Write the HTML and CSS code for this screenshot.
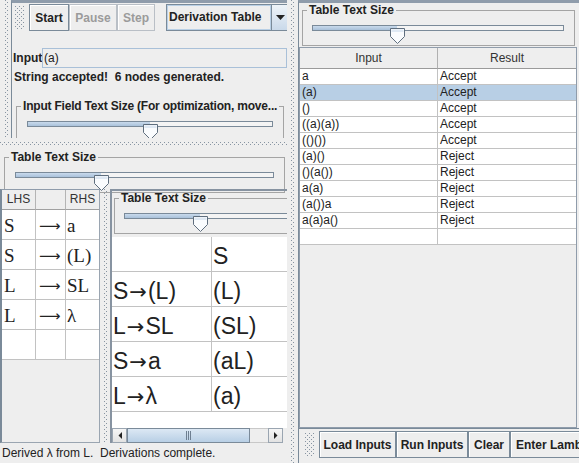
FILE: index.html
```html
<!DOCTYPE html>
<html>
<head>
<meta charset="utf-8">
<link rel="stylesheet" href="styles.css">
</head>
<body>
<div class="app">
  <div class="left">
    <div class="top">
      <div class="edge"><div class="dots vstrip"></div></div>
      <div class="ctrl">
        <div class="toolbar">
          <div class="grip dots"></div>
          <div class="btn b-start">Start</div>
          <div class="btn dis b-pause">Pause</div>
          <div class="btn dis b-step">Step</div>
          <div class="combo">
            <div class="combo-val">Derivation Table</div>
            <div class="combo-arr"><svg width="9" height="5" viewBox="0 0 9 5"><path d="M0 0H9L4.5 5Z" fill="#222"/></svg></div>
          </div>
        </div>
        <div class="inrow"><span class="lbl">Input</span><div class="field">(a)</div></div>
        <div class="msg">String accepted!  6 nodes generated.</div>
        <fieldset class="tbox tbox-in">
          <legend>Input Field Text Size (For optimization, move...</legend>
          <div class="slider s-in">
            <div class="track"><div class="fill" style="width:122px"></div></div>
            <svg class="thumb" style="left:116px" width="15" height="16" viewBox="0 0 15 16"><path d="M0.5 0.5H14.5V8.5L7.5 15.5L0.5 8.5Z" fill="#fafcfe" stroke="#5f6e7e"/><path d="M1.5 1.5H13.5V4H1.5Z" fill="#dfe9f4"/></svg>
          </div>
        </fieldset>
      </div>
    </div>
    <div class="hdiv"><div class="dots hstrip"></div></div>
    <div class="lwrap">
      <fieldset class="tbox tbox-l">
        <legend>Table Text Size</legend>
        <div class="slider s-l">
          <div class="track"><div class="fill" style="width:85px"></div></div>
          <svg class="thumb" style="left:79px" width="15" height="16" viewBox="0 0 15 16"><path d="M0.5 0.5H14.5V8.5L7.5 15.5L0.5 8.5Z" fill="#fafcfe" stroke="#5f6e7e"/><path d="M1.5 1.5H13.5V4H1.5Z" fill="#dfe9f4"/></svg>
        </div>
      </fieldset>
    </div>
    <div class="lower">
      <div class="gpane">
        <div class="grow ghead">
          <div class="gc c1">LHS</div><div class="gc c2"></div><div class="gc c3">RHS</div>
        </div>
        <div class="grow"><div class="gc c1">S</div><div class="gc c2 arr">⟶</div><div class="gc c3">a</div></div>
        <div class="grow"><div class="gc c1">S</div><div class="gc c2 arr">⟶</div><div class="gc c3">(L)</div></div>
        <div class="grow"><div class="gc c1">L</div><div class="gc c2 arr">⟶</div><div class="gc c3">SL</div></div>
        <div class="grow"><div class="gc c1">L</div><div class="gc c2 arr">⟶</div><div class="gc c3">λ</div></div>
        <div class="grow"><div class="gc c1"></div><div class="gc c2"></div><div class="gc c3"></div></div>
      </div>
      <div class="vdiv"><div class="dots vstrip"></div></div>
      <div class="dpane">
        <div class="dview">
          <div class="dcontent">
            <fieldset class="tbox tbox-d">
              <legend>Table Text Size</legend>
              <div class="slider s-d">
                <div class="track"><div class="fill" style="width:75px"></div></div>
                <svg class="thumb" style="left:69px" width="15" height="16" viewBox="0 0 15 16"><path d="M0.5 0.5H14.5V8.5L7.5 15.5L0.5 8.5Z" fill="#fafcfe" stroke="#5f6e7e"/><path d="M1.5 1.5H13.5V4H1.5Z" fill="#dfe9f4"/></svg>
              </div>
            </fieldset>
            <div class="dtable">
              <div class="drow"><div class="dc d1"></div><div class="dc d2">S</div></div>
              <div class="drow"><div class="dc d1">S<span class="ar">→</span>(L)</div><div class="dc d2">(L)</div></div>
              <div class="drow"><div class="dc d1">L<span class="ar">→</span>SL</div><div class="dc d2">(SL)</div></div>
              <div class="drow"><div class="dc d1">S<span class="ar">→</span>a</div><div class="dc d2">(aL)</div></div>
              <div class="drow"><div class="dc d1">L<span class="ar">→</span>λ</div><div class="dc d2">(a)</div></div>
            </div>
          </div>
        </div>
        <div class="hscroll">
          <div class="sb-btn"><svg width="4" height="7" viewBox="0 0 4 7"><path d="M4 0V7L0.5 3.5Z" fill="#222"/></svg></div>
          <div class="sb-thumb"><div class="sb-grip"></div></div>
          <div class="sb-track"></div>
          <div class="sb-btn"><svg width="4" height="7" viewBox="0 0 4 7"><path d="M0 0V7L3.5 3.5Z" fill="#222"/></svg></div>
          <div class="sb-rest"></div>
        </div>
      </div>
    </div>
    <div class="status">Derived λ from L.  Derivations complete.</div>
  </div>
  <div class="mdiv"><div class="dots vstrip"></div></div>
  <div class="right">
    <fieldset class="tbox tbox-r">
      <legend>Table Text Size</legend>
      <div class="slider s-r">
        <div class="track"><div class="fill" style="width:84px"></div></div>
        <svg class="thumb" style="left:78px" width="15" height="16" viewBox="0 0 15 16"><path d="M0.5 0.5H14.5V8.5L7.5 15.5L0.5 8.5Z" fill="#fafcfe" stroke="#5f6e7e"/><path d="M1.5 1.5H13.5V4H1.5Z" fill="#dfe9f4"/></svg>
      </div>
    </fieldset>
    <div class="rpane">
      <div class="rrow rhead"><div class="rc r1">Input</div><div class="rc r2">Result</div></div>
      <div class="rrow"><div class="rc r1">a</div><div class="rc r2">Accept</div></div>
      <div class="rrow sel"><div class="rc r1">(a)</div><div class="rc r2">Accept</div></div>
      <div class="rrow"><div class="rc r1">()</div><div class="rc r2">Accept</div></div>
      <div class="rrow"><div class="rc r1">((a)(a))</div><div class="rc r2">Accept</div></div>
      <div class="rrow"><div class="rc r1">(()())</div><div class="rc r2">Accept</div></div>
      <div class="rrow"><div class="rc r1">(a)()</div><div class="rc r2">Reject</div></div>
      <div class="rrow"><div class="rc r1">()(a())</div><div class="rc r2">Reject</div></div>
      <div class="rrow"><div class="rc r1">a(a)</div><div class="rc r2">Reject</div></div>
      <div class="rrow"><div class="rc r1">(a())a</div><div class="rc r2">Reject</div></div>
      <div class="rrow"><div class="rc r1">a(a)a()</div><div class="rc r2">Reject</div></div>
      <div class="rrow"><div class="rc r1"></div><div class="rc r2"></div></div>
    </div>
    <div class="btoolbar">
      <div class="grip dots"></div>
      <div class="btn b-load">Load Inputs</div>
      <div class="btn b-run">Run Inputs</div>
      <div class="btn b-clear">Clear</div>
      <div class="btn b-lambda">Enter Lambda</div>
    </div>
  </div>
</div>
</body>
</html>
```
FILE: styles.css
```css
* { box-sizing: border-box; }
html, body { margin: 0; padding: 0; }
body {
  width: 579px; height: 463px; overflow: hidden;
  background: #eeeeee;
  font-family: "Liberation Sans", Arial, sans-serif;
  font-size: 12px; color: #222;
}
.app { display: flex; height: 463px; }

.dots {
  background:
    conic-gradient(at 1px 1px, transparent 75%, #8794a2 0) 0 0 / 4px 4px,
    conic-gradient(at 1px 1px, transparent 75%, #8794a2 0) 2px 2px / 4px 4px;
}
.vstrip { width: 4px; height: 100%; }
.hstrip { height: 4px; width: 100%; }

.left { width: 287px; flex: none; display: flex; flex-direction: column; }
.top { height: 138px; display: flex; }
.edge { width: 11px; flex: none; padding-left: 5px; }
.ctrl {
  flex: 1; min-width: 0; overflow: hidden;
  border-left: 1px solid #7a8a99; border-top: 3px solid #8f9cab;
}
.toolbar { display: flex; height: 30px; padding-top: 1px; }
.grip { width: 10px; height: 24px; margin: 2px 0 0 3px; flex: none; }

.btn {
  height: 27px; flex: none;
  border: 1px solid #7a8a99;
  box-shadow: inset 1px 1px 0 #fff;
  background: #eeeeee;
  font-weight: bold; color: #222;
  display: flex; align-items: center; justify-content: center;
  white-space: nowrap; overflow: hidden;
}
.btn.dis { border-color: #b9bfc6; color: #9b9b9b; }
.b-start { width: 40px; margin-left: 4px; }
.b-pause { width: 48px; }
.b-step { width: 38px; }

.combo {
  margin-left: 11px; height: 27px; width: 124px; flex: none;
  border: 1px solid #7a8a99; display: flex;
}
.combo-val {
  width: 104px; flex: none;
  border: 1px solid #b8cfe5;
  font-weight: bold; line-height: 23px; padding-left: 1px;
  white-space: nowrap;
}
.combo-arr {
  width: 18px; flex: none;
  border-left: 1px solid #7a8a99;
  background: linear-gradient(#eef3f8, #c9d9ea);
  display: flex; align-items: center; justify-content: center;
}

.inrow { display: flex; align-items: center; height: 20px; margin-top: 15px; }
.lbl { width: 30px; flex: none; font-weight: bold; padding-left: 1px; }
.field {
  flex: 1; height: 20px; border: 1px solid #a9c0d8;
  line-height: 18px; padding-left: 1px; white-space: nowrap;
}
.msg { font-weight: bold; margin-top: 2px; padding-left: 2px; line-height: 14px; white-space: pre; }

.tbox {
  margin: 0; padding: 0; min-width: 0;
  border: 1px solid #a4a4a4;
}
.tbox legend {
  font-weight: bold; line-height: 14px; padding: 0 2px; margin-left: 4px;
  color: #222; white-space: nowrap;
}
.tbox-in { margin: 15px 3px 0 4px; }
.tbox-in legend { letter-spacing: -0.2px; }

.slider { position: relative; height: 20px; }
.track {
  margin-top: 8px; height: 6px;
  border: 1px solid #7a8a99; background: #f4f4f4;
  display: flex;
}
.fill { height: 100%; background: linear-gradient(#c9daec, #a9c1da); }
.thumb { position: absolute; top: 3px; }
.s-in { margin-left: 10px; width: 246px; }
.s-l { margin-left: 10px; width: 259px; }
.s-d { margin-left: 9px; width: 262px; }
.s-r { margin-left: 9px; width: 252px; }

.hdiv { height: 10px; padding-top: 4px; }
.lwrap { height: 41px; padding: 2px 2px 0 4px; }

.lower { display: flex; height: 254px; }
.gpane {
  width: 100px; flex: none;
  border-top: 1px solid #8f9cab;
  border-left: 2px solid #7a8a99;
  border-right: 1px solid #9aa5b1;
  border-bottom: 1px solid #9aa5b1;
  background: #eeeeee;
}
.grow { display: flex; }
.gc {
  height: 30px; flex: none;
  border-right: 1px solid #c2c2c2; border-bottom: 1px solid #c2c2c2;
  background: #fff;
  font-family: "Liberation Serif", "Times New Roman", serif;
  font-size: 19px; line-height: 28px; padding-top: 2px;
  white-space: nowrap; overflow: hidden;
}
.c1 { width: 34px; padding-left: 2px; }
.c2 { width: 30px; padding-left: 3px; }
.c3 { width: 33px; padding-left: 1px; border-right: none; }
.arr { font-family: "DejaVu Sans", sans-serif; font-size: 15px; }
.ghead .gc {
  height: 20px; background: #eeeeee;
  font-family: "Liberation Sans", Arial, sans-serif; font-size: 12px;
  line-height: 19px; padding: 0; text-align: center; color: #333;
  border-right-color: #b4b4b4; border-bottom-color: #a0a0a0;
}

.vdiv { width: 10px; flex: none; padding-left: 4px; }
.dpane {
  width: 177px; flex: none; overflow: hidden;
  border-left: 2px solid #8793a1; border-top: 2px solid #8793a1;
  display: flex; flex-direction: column;
}
.dview { flex: 1; overflow: hidden; }
.dcontent { width: 300px; height: 100%; display: flex; flex-direction: column; }
.tbox-d { margin: 0 0 0 2px; width: 290px; }
.dtable { margin-top: 3px; flex: 1; background: #fff; }
.drow { display: flex; }
.dc {
  height: 35px; flex: none;
  border-bottom: 1px solid #c2c2c2;
  font-size: 23px; line-height: 30px; padding-top: 4px;
  white-space: nowrap;
}
.ar { font-family: "DejaVu Sans", sans-serif; font-size: 21px; margin: 0 1px; }
.d1 { width: 100px; border-right: 1px solid #c2c2c2; padding-left: 1px; }
.d2 { width: 200px; padding-left: 1px; }

.hscroll { height: 15px; flex: none; display: flex; background: #eeeeee; }
.sb-btn {
  width: 15px; flex: none;
  border: 1px solid #9aa5b1;
  background: linear-gradient(#f6f6f6, #e2e2e2);
  display: flex; align-items: center; justify-content: center;
}
.sb-thumb {
  width: 123px; flex: none;
  border: 1px solid #7a8a99;
  background: linear-gradient(#dce8f4, #b8cfe5);
  display: flex; align-items: center; justify-content: center;
}
.sb-grip {
  width: 5px; height: 9px;
  background: repeating-linear-gradient(90deg, #6e7f91 0 1px, transparent 1px 2px);
}
.sb-track { width: 18px; flex: none; border-top: 1px solid #c8c8c8; border-bottom: 1px solid #c8c8c8; }
.sb-rest { flex: 1; }

.status { height: 20px; line-height: 20px; padding-left: 2px; white-space: pre; }

.mdiv { width: 11px; flex: none; padding-left: 4px; }

.right {
  flex: 1; min-width: 0; overflow: hidden;
  border-left: 1px solid #7a8a99; border-top: 3px solid #8f9cab;
  display: flex; flex-direction: column;
}
.tbox-r { margin: 0 4px 0 3px; }
.rpane {
  margin-top: 1px; flex: 1; width: 278px;
  border: 1px solid #8f9cab;
  background: #eeeeee;
}
.rrow { display: flex; }
.rc {
  height: 16px; width: 138px; flex: none;
  border-bottom: 1px solid #c2c2c2;
  background: #fff; line-height: 15px; padding-left: 2px;
  white-space: nowrap; color: #222;
}
.r1 { border-right: 1px solid #c2c2c2; }
.sel .rc { background: #b8cfe5; }
.rhead .rc {
  height: 21px; line-height: 20px; text-align: center; padding: 0;
  background: #eeeeee; color: #333;
  border-bottom-color: #9a9a9a;
}
.rhead .r1 { border-right-color: #b0b0b0; }

.btoolbar {
  height: 35px; flex: none;
  border-top: 1px solid #7a8a99;
  display: flex; padding: 2px 0 0 3px;
}
.b-load { width: 77px; margin-left: 4px; }
.b-run { width: 72px; }
.b-clear { width: 42px; }
.b-lambda { width: 92px; justify-content: flex-start; padding-left: 5px; }
```
